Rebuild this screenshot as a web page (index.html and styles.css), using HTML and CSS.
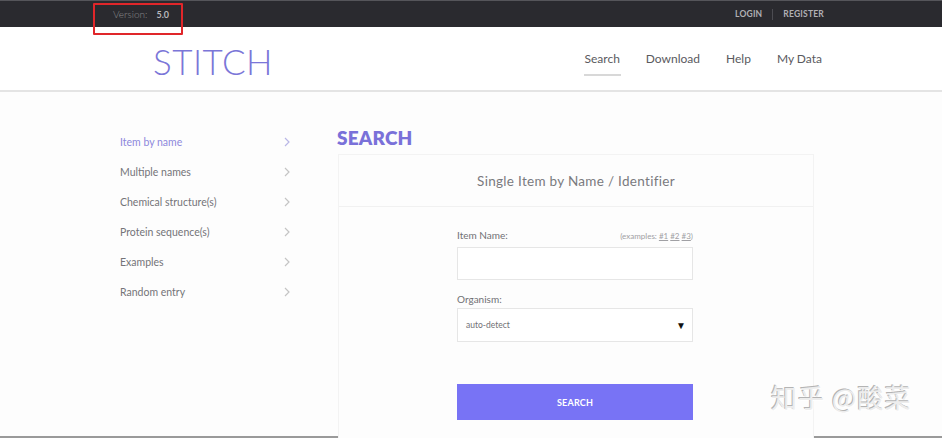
FILE: index.html
```html
<!DOCTYPE html>
<html lang="en">
<head>
<meta charset="utf-8">
<title>STITCH - Search</title>
<link rel="stylesheet" href="styles.css">
</head>
<body>
<div class="topbar">
  <div class="version"><span class="vlabel">Version:</span><span class="vnum">5.0</span></div>
  <div class="account"><a class="acc">LOGIN</a><span class="sep"></span><a class="acc">REGISTER</a></div>
  <div class="annot"></div>
</div>
<header class="header">
  <div class="logo">STITCH</div>
  <nav class="nav">
    <a class="navitem active">Search</a>
    <a class="navitem">Download</a>
    <a class="navitem">Help</a>
    <a class="navitem">My Data</a>
  </nav>
</header>
<main class="main">
  <aside class="sidebar">
    <div class="sitem current"><span>Item by name</span><svg class="chev" width="6" height="10" viewBox="0 0 6 10"><polyline points="1,1 5,5 1,9" fill="none" stroke="#b9b7e6" stroke-width="1.2"/></svg></div>
    <div class="sitem"><span>Multiple names</span><svg class="chev" width="6" height="10" viewBox="0 0 6 10"><polyline points="1,1 5,5 1,9" fill="none" stroke="#c4c4c4" stroke-width="1.2"/></svg></div>
    <div class="sitem"><span>Chemical structure(s)</span><svg class="chev" width="6" height="10" viewBox="0 0 6 10"><polyline points="1,1 5,5 1,9" fill="none" stroke="#c4c4c4" stroke-width="1.2"/></svg></div>
    <div class="sitem"><span>Protein sequence(s)</span><svg class="chev" width="6" height="10" viewBox="0 0 6 10"><polyline points="1,1 5,5 1,9" fill="none" stroke="#c4c4c4" stroke-width="1.2"/></svg></div>
    <div class="sitem"><span>Examples</span><svg class="chev" width="6" height="10" viewBox="0 0 6 10"><polyline points="1,1 5,5 1,9" fill="none" stroke="#c4c4c4" stroke-width="1.2"/></svg></div>
    <div class="sitem"><span>Random entry</span><svg class="chev" width="6" height="10" viewBox="0 0 6 10"><polyline points="1,1 5,5 1,9" fill="none" stroke="#c4c4c4" stroke-width="1.2"/></svg></div>
  </aside>
  <section class="content">
    <h1 class="title">SEARCH</h1>
    <div class="card">
      <div class="cardhead">Single Item by Name / Identifier</div>
      <div class="cardbody">
        <form class="form">
          <div class="labelrow"><label class="label">Item Name:</label><span class="examples">(examples: <u>#1</u> <u>#2</u> <u>#3</u>)</span></div>
          <div class="input"></div>
          <label class="label org">Organism:</label>
          <div class="select"><span>auto-detect</span><span class="arrow">▼</span></div>
          <button type="button" class="btn">SEARCH</button>
        </form>
      </div>
    </div>
  </section>
  <div class="watermark">知乎 @酸菜</div>
</main>
<div class="bottomline"></div>
</body>
</html>
```

FILE: styles.css
```css
* { box-sizing: border-box; }
html, body { margin: 0; padding: 0; }
body {
  font-family: "Lato", "Open Sans", sans-serif;
  background: #fdfdfd;
  color: #666;
  width: 942px;
  height: 438px;
  overflow: hidden;
}
.topbar {
  position: relative;
  height: 27px;
  background: #2a2a2f;
  border-top: 1px solid #55555a;
  display: flex;
  align-items: center;
  justify-content: space-between;
  padding: 0 118px 0 113px;
}
.version { font-size: 10px; color: #8a8a8e; display: flex; align-items: center; gap: 9px; }
.vlabel { font-weight: 300; }
.vnum { font-weight: 700; color: #b8b8bc; font-size: 9px; }
.account { display: flex; align-items: center; font-size: 8.5px; font-weight: 700; color: #b0b0b4; letter-spacing: 0.2px; }
.sep { display: inline-block; width: 1px; height: 11px; background: #4c4c52; margin: 0 10px; }
.annot {
  position: absolute;
  left: 93px; top: 2px;
  width: 90px; height: 32px;
  border: 2px solid #e0262a;
  border-radius: 1px;
}
.header {
  height: 65px;
  background: #ffffff;
  border-bottom: 2px solid #e4e4e4;
  display: flex;
  align-items: center;
  justify-content: space-between;
  padding: 0 120px 0 153px;
}
.logo { font-size: 35px; font-weight: 300; color: #7b76d8; letter-spacing: 0.5px; margin-top: 4px; }
.nav { display: flex; gap: 26px; font-size: 12px; color: #5a5a5e; font-weight: 400; }
.navitem { position: relative; padding: 4px 0; }
.navitem.active::after {
  content: "";
  position: absolute;
  left: -1px; right: -1px; bottom: -6px;
  height: 2px;
  background: #d8d8d8;
}
.main {
  position: relative;
  display: flex;
  height: 344px;
  padding: 35px 0 0 120px;
}
.sidebar { width: 217px; }
.sitem {
  display: flex;
  justify-content: space-between;
  align-items: center;
  width: 170px;
  height: 30px;
  font-size: 10.5px;
  color: #747478;
  font-weight: 400;
}
.sitem.current { color: #8d88dc; }
.chev { display: block; }
.content { width: 477px; }
.title {
  margin: 0;
  font-size: 19px;
  font-weight: 800;
  color: #7a71d9;
  height: 27px;
  line-height: 22px;
  letter-spacing: 0.2px;
}
.card {
  margin-left: 1px;
  height: 300px;
  border: 1px solid #f3f3f3;
  border-bottom: none;
  background: #fdfdfd;
}
.cardhead {
  height: 52px;
  display: flex;
  align-items: center;
  justify-content: center;
  font-size: 13.5px;
  color: #7a7a7e;
  border-bottom: 1px solid #f1f1f1;
  font-weight: 400;
  letter-spacing: 0.3px;
}
.cardbody { padding: 22px 0 0 118px; }
.form { width: 236px; }
.labelrow { display: flex; justify-content: space-between; align-items: baseline; height: 18px; }
.label { font-size: 10px; color: #707074; display: block; }
.examples { font-size: 8px; color: #a0a0a4; }
.input {
  height: 33px;
  border: 1px solid #e6e6e6;
  background: #fff;
  margin-bottom: 10px;
}
.org { height: 18px; line-height: 18px; }
.select {
  height: 34px;
  border: 1px solid #e6e6e6;
  background: #fff;
  display: flex;
  justify-content: space-between;
  align-items: center;
  padding: 0 6px 0 8px;
  font-size: 8.5px;
  color: #707074;
}
.arrow { font-size: 10px; color: #111; }
.btn {
  display: block;
  margin-top: 42px;
  width: 236px;
  height: 36px;
  border: none;
  background: #7873f5;
  color: #fff;
  font-family: inherit;
  font-size: 9px;
  font-weight: 700;
  letter-spacing: 0.2px;
  padding: 0;
}
.watermark {
  position: absolute;
  left: 771px;
  top: 286px;
  font-family: "Noto Sans CJK SC", sans-serif;
  font-size: 26px;
  font-weight: 400;
  color: #ededed;
  text-shadow: -1px -1px 0 #b4b4b4, 1px 1px 0 #ffffff;
  letter-spacing: 1px;
}
.bottomline { height: 2px; background: #9a9a9a; }
```
